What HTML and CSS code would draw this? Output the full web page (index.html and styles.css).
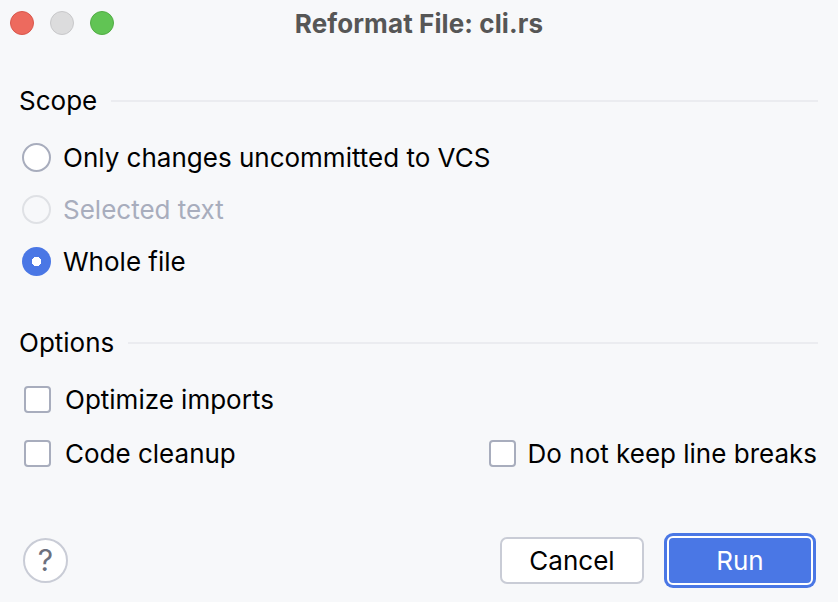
FILE: index.html
```html
<!DOCTYPE html>
<html>
<head>
<meta charset="utf-8">
<link rel="stylesheet" href="styles.css">
</head>
<body>
<div class="dialog">
  <div class="titlebar">
    <div class="lights">
      <span class="light red"></span>
      <span class="light gray"></span>
      <span class="light green"></span>
    </div>
    <div class="title">Reformat File: cli.rs</div>
  </div>

  <div class="content">
    <div class="group-head scope-head"><span class="group-label">Scope</span><span class="group-line"></span></div>
    <div class="radios">
      <div class="radio-row"><span class="radio"></span><span class="label">Only changes uncommitted to VCS</span></div>
      <div class="radio-row disabled"><span class="radio"></span><span class="label">Selected text</span></div>
      <div class="radio-row"><span class="radio checked"></span><span class="label">Whole file</span></div>
    </div>

    <div class="group-head options-head"><span class="group-label">Options</span><span class="group-line"></span></div>
    <div class="checks">
      <div class="check-row">
        <div class="check-item"><span class="checkbox"></span><span class="label">Optimize imports</span></div>
      </div>
      <div class="check-row split">
        <div class="check-item"><span class="checkbox"></span><span class="label">Code cleanup</span></div>
        <div class="check-item right"><span class="checkbox"></span><span class="label">Do not keep line breaks</span></div>
      </div>
    </div>
  </div>

  <div class="footer">
    <div class="help">?</div>
    <div class="buttons">
      <button class="btn cancel">Cancel</button>
      <button class="btn run">Run</button>
    </div>
  </div>
</div>
</body>
</html>
```
FILE: styles.css
```css
* { box-sizing: border-box; }
html, body { margin: 0; padding: 0; }
body {
  width: 838px;
  height: 602px;
  background: #f7f8fa;
  font-family: Inter, "Noto Sans", sans-serif;
  color: #000;
  overflow: hidden;
}
.dialog {
  width: 838px;
  height: 602px;
  display: flex;
  flex-direction: column;
}
.titlebar {
  height: 46px;
  display: flex;
  align-items: center;
  justify-content: center;
  position: relative;
}
.lights {
  position: absolute;
  left: 10px;
  top: 11px;
  display: flex;
  gap: 16px;
}
.light {
  width: 24px;
  height: 24px;
  border-radius: 50%;
  display: block;
}
.light.red { background: #ed6a5e; border: 1px solid #d9574c; }
.light.gray { background: #dcdcdd; border: 1px solid #c8c8ca; }
.light.green { background: #61c454; border: 1px solid #52ad45; }
.title {
  font-weight: 700;
  font-size: 26px;
  color: #565656;
  letter-spacing: 0.1px;
}

.content {
  padding: 0 20px 0 19px;
}
.group-head {
  display: flex;
  align-items: center;
  height: 40px;
  gap: 14px;
}
.scope-head { margin-top: 35px; }
.options-head { margin-top: 36px; }
.group-label {
  font-size: 26px;
  line-height: 40px;
}
.group-line {
  flex: 1;
  height: 2px;
  background: #ebecf0;
}
.radios { margin-top: 10px; padding-left: 3px; }
.radio-row {
  height: 52px;
  display: flex;
  align-items: center;
  gap: 12px;
}
.label { font-size: 26px; }
.radio {
  width: 29px;
  height: 29px;
  border-radius: 50%;
  border: 2px solid #a8adbd;
  background: #fff;
  display: block;
  flex: none;
}
.radio-row.disabled .radio { border-color: #dfe1e5; background: #f7f8fa; }
.radio-row.disabled .label { color: #a8adbd; }
.radio.checked {
  border: none;
  background: radial-gradient(circle, #fff 0 4.5px, #4a77e5 5px);
}
.checks { margin-top: 9px; padding-left: 5px; }
.check-row {
  height: 54px;
  display: flex;
  align-items: center;
}
.check-row.split { justify-content: space-between; }
.check-item {
  display: flex;
  align-items: center;
  gap: 14px;
}
.check-item.right { gap: 12px; margin-right: 1px; }
.checkbox {
  width: 27px;
  height: 27px;
  border: 2px solid #a8adbd;
  border-radius: 4px;
  background: #fff;
  display: block;
  flex: none;
}

.footer {
  margin-top: auto;
  height: 84px;
  padding: 0 25px 0 23px;
  display: flex;
  align-items: center;
  justify-content: space-between;
}
.help {
  width: 45px;
  height: 45px;
  border-radius: 50%;
  border: 2px solid #c9ccd6;
  background: #fff;
  color: #6c707e;
  font-size: 30px;
  display: flex;
  align-items: center;
  justify-content: center;
  line-height: 1;
}
.buttons {
  display: flex;
  align-items: center;
  gap: 23px;
}
.btn {
  font-family: Inter, "Noto Sans", sans-serif;
  font-size: 26px;
  height: 47px;
  width: 144px;
  border-radius: 7px;
  padding: 0;
  margin: 0;
}
.cancel {
  background: #fff;
  border: 2px solid #c9ccd6;
  color: #000;
}
.run {
  width: 146px;
  height: 49px;
  background: #4a77e5;
  border: 2px solid #fff;
  color: #fff;
  box-shadow: 0 0 0 3px #4a77e5;
  border-radius: 6px;
}
```
